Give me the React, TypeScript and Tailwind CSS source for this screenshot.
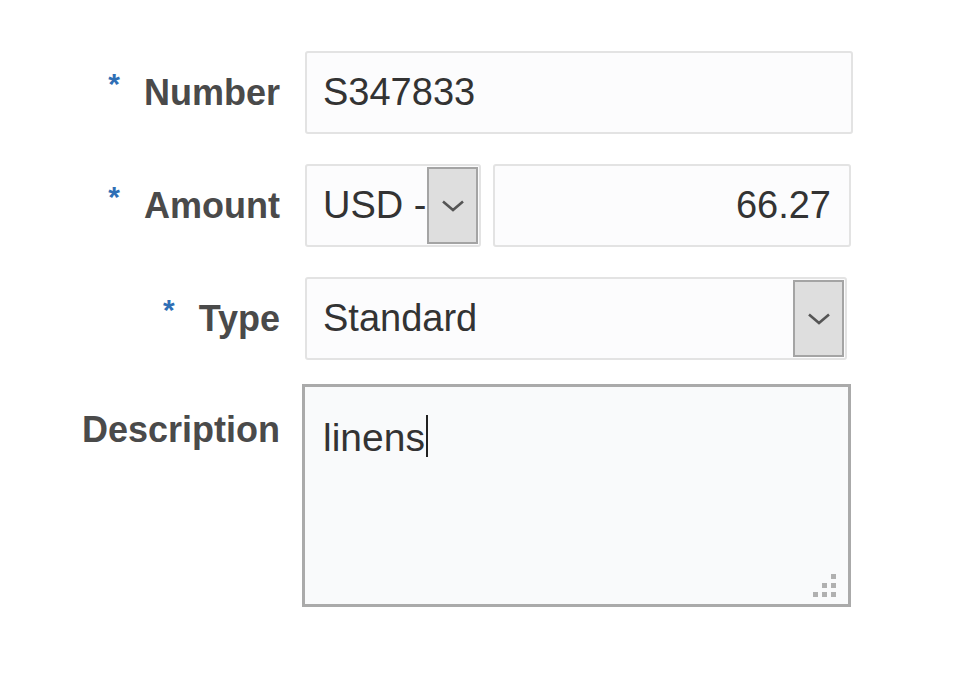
import React from "react";

const Chevron = () => (
  <svg width="24" height="14" viewBox="0 0 24 14" fill="none">
    <path d="M2 2.5 L12 11 L22 2.5" stroke="#555" strokeWidth="2.6" />
  </svg>
);

const Label = ({ text, required }: { text: string; required?: boolean }) => (
  <div className="flex items-start justify-end text-[36px] font-bold leading-none text-[#4a4a4a]">
    {required && <span className="mr-[24px] -mt-[6px] text-[30px] text-[#2f6fb5]">*</span>}
    <span>{text}</span>
  </div>
);

const DropButton = ({ className }: { className: string }) => (
  <div
    className={`flex shrink-0 items-center justify-center border-2 border-[#a4a4a4] bg-[#dedede] ${className}`}
  >
    <Chevron />
  </div>
);

export default function App() {
  return (
    <div
      className="h-[680px] w-[972px] bg-white pt-[51px] text-[#333]"
      style={{ fontFamily: '"Liberation Sans", Arial, sans-serif' }}
    >
      <div className="grid grid-cols-[280px_548px] gap-x-[25px] gap-y-[30px]">
        {/* Number */}
        <div className="flex h-[83px] items-center justify-end">
          <Label text="Number" required />
        </div>
        <div className="flex h-[83px] items-center rounded-[3px] border-2 border-[#e3e3e3] bg-[#fcfcfd] px-[16px] text-[38px]">
          S347833
        </div>

        {/* Amount */}
        <div className="flex h-[83px] items-center justify-end">
          <Label text="Amount" required />
        </div>
        <div className="flex h-[83px] gap-[12px]">
          <div className="flex w-[176px] items-center justify-between overflow-hidden rounded-[3px] border-2 border-[#e3e3e3] bg-[#fcfcfd] py-[1px] pl-[16px] pr-[1px] text-[38px]">
            <span className="whitespace-nowrap">USD -</span>
            <DropButton className="h-full w-[51px]" />
          </div>
          <div className="flex w-[358px] items-center justify-end rounded-[3px] border-2 border-[#e3e3e3] bg-[#fcfcfd] pr-[18px] text-[38px]">
            66.27
          </div>
        </div>

        {/* Type */}
        <div className="flex h-[83px] items-center justify-end">
          <Label text="Type" required />
        </div>
        <div className="flex h-[83px] w-[542px] items-center justify-between rounded-[3px] border-2 border-[#e3e3e3] bg-[#fcfcfd] py-[1px] pl-[16px] pr-[1px] text-[38px]">
          <span>Standard</span>
          <DropButton className="h-full w-[51px]" />
        </div>

        {/* Description */}
        <div className="-mt-[6px] flex justify-end pt-[28px]">
          <Label text="Description" />
        </div>
        <div className="relative -ml-[3px] -mt-[6px] h-[223px] w-[549px] border-[3px] border-[#aaaaaa] bg-[#f9fafb] pl-[18px] pt-[22px] text-[39px] leading-none">
          <span>linens</span>
          <span className="ml-[1px] inline-block h-[42px] w-[2px] translate-y-[6px] bg-[#222]" />
          <div className="absolute bottom-[7px] right-[12px] grid grid-cols-3 gap-[4px]">
            <span className="h-[5px] w-[5px]" />
            <span className="h-[5px] w-[5px]" />
            <span className="h-[5px] w-[5px] bg-[#b0b0b0]" />
            <span className="h-[5px] w-[5px]" />
            <span className="h-[5px] w-[5px] bg-[#b0b0b0]" />
            <span className="h-[5px] w-[5px] bg-[#b0b0b0]" />
            <span className="h-[5px] w-[5px] bg-[#b0b0b0]" />
            <span className="h-[5px] w-[5px] bg-[#b0b0b0]" />
            <span className="h-[5px] w-[5px] bg-[#b0b0b0]" />
          </div>
        </div>
      </div>
    </div>
  );
}
